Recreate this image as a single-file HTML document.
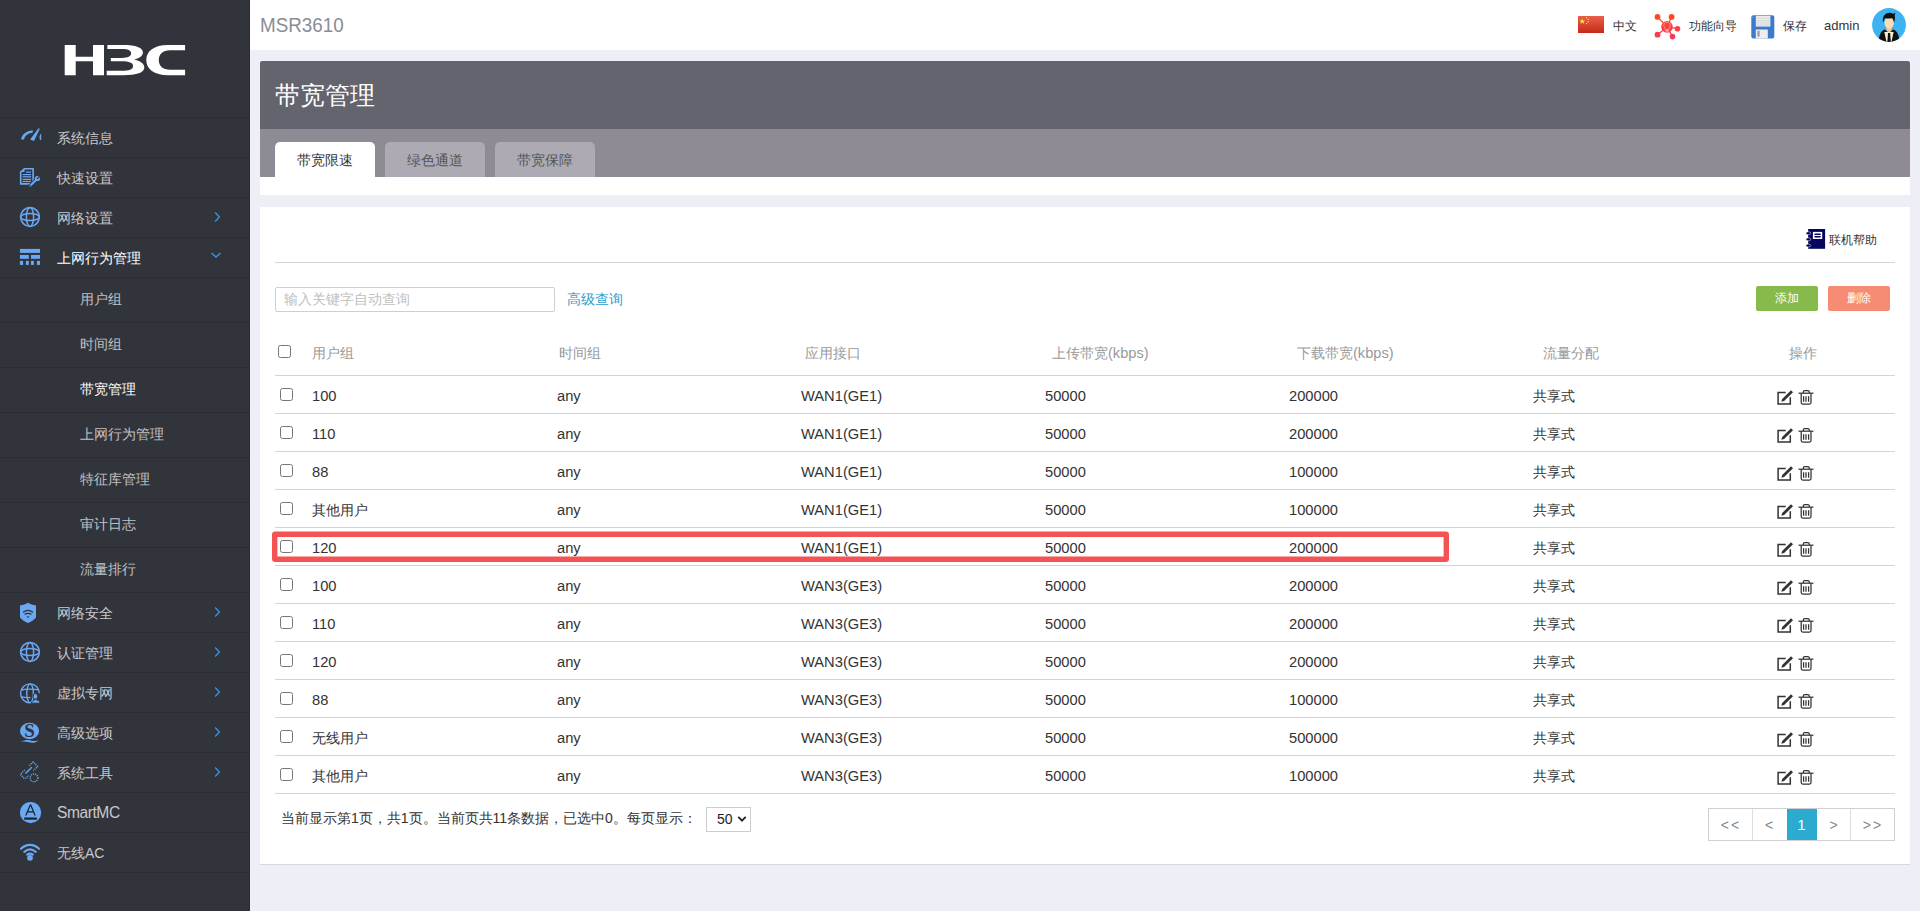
<!DOCTYPE html>
<html><head><meta charset="utf-8"><title>MSR3610</title>
<style>*{margin:0;padding:0;box-sizing:border-box}
html,body{width:1920px;height:911px;overflow:hidden;background:#eeeef7;font-family:"Liberation Sans",sans-serif;}
.abs{position:absolute}
#side{position:absolute;left:0;top:0;width:250px;height:911px;background:#32343c}
.sep{left:0;width:249px;height:1px;background:#2b2d34}
.nt{left:57px;font-size:14px;line-height:42px;white-space:nowrap}
.st{left:80px;font-size:14px;line-height:45px;white-space:nowrap}
#top{position:absolute;left:250px;top:0;width:1670px;height:50px;background:#fff}
.tr{top:18px;font-size:12px;color:#333;line-height:16px}
.tab{top:142px;width:100px;height:35px;background:#adaab3;border-radius:5px 5px 0 0;font-size:14px;color:#555;text-align:center;line-height:36px}
.hl{left:275px;width:1620px;height:1px;background:#d4d4d4}
.cell{font-size:14.7px;color:#333;white-space:nowrap;line-height:40px}
.cj{font-size:14px;line-height:41px}
.hd{top:344px;font-size:14px;color:#999;white-space:nowrap;line-height:18px}
.cb{width:13px;height:13px;border:1px solid #767676;border-radius:2.5px;background:#fff}
.btn{top:286px;width:62px;height:25px;border-radius:2px;color:#fff;font-size:12px;text-align:center;line-height:25px}
.pg{top:809px;width:60px;text-align:center;font-size:14px;line-height:33px}
</style></head><body>
<div id="side">
<svg class="abs" style="left:60px;top:40px" width="130" height="40" viewBox="0 0 130 40"><g fill="#fff">
<path d="M4.7,4.9H15.7V16.8H33V4.9H44V35.2H33V21.3H15.7V35.2H4.7Z"/>
<path d="M47.4,4.9H63C76,4.9 82.9,7.5 82.9,12.5C82.9,16 79,18.5 74,19.6C80,20.8 84.3,23.5 84.3,27.5C84.3,32.5 77,35.2 63,35.2H46.7V30.8H62C69,30.8 73.1,29.5 73.1,26C73.1,22.8 69,21.3 62,21.3H50.8V17.9H62C68,17.9 71.1,16.2 71.1,13.5C71.1,10.5 68,9.1 62,9.1H47.4Z"/>
<path d="M125.1,4.9H108C94,4.9 86.3,11 86.3,20C86.3,29 94,35.2 108,35.2H125.1V29.8H110C103,29.8 98.8,26 98.8,20C98.8,14 103,10.2 110,10.2H125.1Z"/>
</g></svg>
<div class="abs sep" style="top:117px"></div>
<div class="abs sep" style="top:157px"></div>
<div class="abs sep" style="top:197px"></div>
<div class="abs sep" style="top:237px"></div>
<div class="abs sep" style="top:277px"></div>
<div class="abs sep" style="top:322px"></div>
<div class="abs sep" style="top:367px"></div>
<div class="abs sep" style="top:412px"></div>
<div class="abs sep" style="top:457px"></div>
<div class="abs sep" style="top:502px"></div>
<div class="abs sep" style="top:547px"></div>
<div class="abs sep" style="top:592px"></div>
<div class="abs sep" style="top:632px"></div>
<div class="abs sep" style="top:672px"></div>
<div class="abs sep" style="top:712px"></div>
<div class="abs sep" style="top:752px"></div>
<div class="abs sep" style="top:792px"></div>
<div class="abs sep" style="top:832px"></div>
<div class="abs sep" style="top:872px"></div>
<div class="abs nt" style="top:117px;color:#c8c8ca">系统信息</div>
<svg class="abs" style="left:15px;top:125px" width="30" height="30" viewBox="0 0 30 30"><g fill="#6aa8f2"><path d="M6,14.5 C7,9.5 11,6 17.8,5.2 L17.6,7.8 C12.5,8.5 9.8,11 9,14.5Z"/><path d="M15.1,14.6 L23.6,3.3 L24.8,3.8 L19,15.9Z"/><path d="M25.8,8.8 C24.4,10.5 23.9,12.8 25.3,15.1 L26.2,15.1 L26.2,8.8Z"/></g></svg>
<div class="abs nt" style="top:157px;color:#c8c8ca">快速设置</div>
<svg class="abs" style="left:15px;top:163px" width="30" height="30" viewBox="0 0 30 30"><g fill="none" stroke="#6aa8f2" stroke-width="1.6"><path d="M5.7,9 L9.5,5.7 H18.1 V20.9 H5.7Z"/></g><g fill="#6aa8f2"><path d="M5,9 L9.5,5 V9Z"/><rect x="11" y="8.5" width="5" height="1.2"/><rect x="7.6" y="11" width="8.5" height="1.2"/><rect x="7.6" y="13.2" width="8.5" height="1.2"/><rect x="7.6" y="15.8" width="8.5" height="1.2"/><rect x="7.6" y="17.9" width="8.5" height="1.2"/></g><path d="M14.8,23.2 L21.5,16.6" stroke="#32343c" stroke-width="4" stroke-linecap="round"/><path d="M15.4,22.6 L21.3,16.8" stroke="#6aa8f2" stroke-width="2.1" stroke-linecap="round"/><circle cx="22.4" cy="15.5" r="2.6" fill="#6aa8f2"/><path d="M22.4,15.5 L24.6,11.8 L26.2,13.6Z" fill="#32343c"/><circle cx="22.6" cy="15.3" r="0.9" fill="#32343c"/><circle cx="15.4" cy="22.6" r="0.55" fill="#32343c"/></svg>
<div class="abs nt" style="top:197px;color:#c8c8ca">网络设置</div>
<svg class="abs" style="left:15px;top:203px" width="30" height="30" viewBox="0 0 30 30"><g fill="none" stroke="#6aa8f2" stroke-width="1.5"><circle cx="15" cy="14" r="9.4"/><ellipse cx="15" cy="14" rx="3.6" ry="9.4"/><ellipse cx="15" cy="14" rx="9.4" ry="3.6"/></g></svg>
<svg class="abs" style="left:212px;top:211px" width="10" height="12" viewBox="0 0 10 12"><path d="M3.2,1.5L7.4,6L3.2,10.5" fill="none" stroke="#3a92ea" stroke-width="1.3"/></svg>
<div class="abs nt" style="top:237px;color:#fff">上网行为管理</div>
<svg class="abs" style="left:15px;top:243px" width="30" height="30" viewBox="0 0 30 30"><g fill="#6aa8f2"><rect x="4.9" y="5.9" width="20.1" height="4"/><rect x="4.9" y="12" width="8.9" height="3.8"/><rect x="16" y="12" width="9" height="3.8"/><rect x="4.9" y="17.9" width="3.2" height="4"/><rect x="10.9" y="17.9" width="2.9" height="4"/><rect x="16" y="17.9" width="2.9" height="4"/><rect x="21.9" y="17.9" width="3.1" height="4"/></g></svg>
<svg class="abs" style="left:210px;top:250px" width="12" height="10" viewBox="0 0 12 10"><path d="M1.5,3L6,7L10.5,3" fill="none" stroke="#3a92ea" stroke-width="1.4"/></svg>
<div class="abs nt" style="top:592px;color:#c8c8ca">网络安全</div>
<svg class="abs" style="left:15px;top:597px" width="30" height="30" viewBox="0 0 30 30"><path fill="#6aa8f2" d="M5,8.4 C8,8.2 10.5,7.5 13,5.8 C15.5,7.5 18,8.2 21,8.4 V20.5 C19,23 16,25 13,26 C10,25 7,23 5,20.5Z"/><g fill="none" stroke="#32343c" stroke-width="1.2"><path d="M8,15.5 C11,13 15,13 18,15.5"/><path d="M9.6,17.6 C11.8,16 14.2,16 16.4,17.6"/></g><path fill="#32343c" d="M11.2,19.5 H14.8 L13,21Z"/></svg>
<svg class="abs" style="left:212px;top:606px" width="10" height="12" viewBox="0 0 10 12"><path d="M3.2,1.5L7.4,6L3.2,10.5" fill="none" stroke="#3a92ea" stroke-width="1.3"/></svg>
<div class="abs nt" style="top:632px;color:#c8c8ca">认证管理</div>
<svg class="abs" style="left:15px;top:638px" width="30" height="30" viewBox="0 0 30 30"><g fill="none" stroke="#6aa8f2" stroke-width="1.5"><circle cx="15" cy="14" r="9.4"/><ellipse cx="15" cy="14" rx="3.6" ry="9.4"/><ellipse cx="15" cy="14" rx="9.4" ry="3.6"/></g></svg>
<svg class="abs" style="left:212px;top:646px" width="10" height="12" viewBox="0 0 10 12"><path d="M3.2,1.5L7.4,6L3.2,10.5" fill="none" stroke="#3a92ea" stroke-width="1.3"/></svg>
<div class="abs nt" style="top:672px;color:#c8c8ca">虚拟专网</div>
<svg class="abs" style="left:15px;top:677px" width="30" height="30" viewBox="0 0 30 30"><g fill="none" stroke="#6aa8f2" stroke-width="1.4"><path d="M24.4,16.3 A9.4,9.4 0 1 0 14.5,25.7"/><ellipse cx="15.1" cy="16.3" rx="3.3" ry="9.4"/><path d="M6.2,13 C10,11.8 20,11.8 23.8,13"/><path d="M6.2,19.6 C9,20.6 12,20.9 15.5,20.5"/></g><g fill="#6aa8f2" stroke="#32343c" stroke-width="1"><ellipse cx="20.4" cy="19.4" rx="2.3" ry="2.9"/><path d="M16.5,26.2 C16.9,23.8 18.5,22.6 20.4,22.6 C22.4,22.6 24.4,23.6 25.2,26.2Z"/></g></svg>
<svg class="abs" style="left:212px;top:686px" width="10" height="12" viewBox="0 0 10 12"><path d="M3.2,1.5L7.4,6L3.2,10.5" fill="none" stroke="#3a92ea" stroke-width="1.3"/></svg>
<div class="abs nt" style="top:712px;color:#c8c8ca">高级选项</div>
<svg class="abs" style="left:15px;top:717px" width="30" height="30" viewBox="0 0 30 30"><ellipse cx="14.55" cy="14" rx="9.55" ry="8.2" fill="#6aa8f2"/><text x="14.6" y="20.2" text-anchor="middle" font-family="Liberation Serif" font-weight="bold" font-size="19" fill="#32343c">S</text><path fill="#6aa8f2" d="M5.8,24.8 C9,23.2 12,22.5 14.5,23.3 C17,24.2 20,24.4 23.5,23.4 C21,25.8 17,26.2 14.2,25.3 C11.5,24.4 8.5,24.3 5.8,24.8Z"/></svg>
<svg class="abs" style="left:212px;top:726px" width="10" height="12" viewBox="0 0 10 12"><path d="M3.2,1.5L7.4,6L3.2,10.5" fill="none" stroke="#3a92ea" stroke-width="1.3"/></svg>
<div class="abs nt" style="top:752px;color:#c8c8ca">系统工具</div>
<svg class="abs" style="left:15px;top:757px" width="30" height="30" viewBox="0 0 30 30"><g fill="none" stroke="#6aa8f2" stroke-width="1.3" stroke-dasharray="1.2,0.9"><path d="M14.4,8.6 L18.1,5 L22.6,9.5 L18.4,13.6"/><path d="M9.7,13 L5.4,17.3 L9,21.2 L11,21.2 L13.7,18.5"/><circle cx="19" cy="20.9" r="3.9"/></g><path d="M10.5,16.6 L16.8,10.3" stroke="#6aa8f2" stroke-width="1.4"/></svg>
<svg class="abs" style="left:212px;top:766px" width="10" height="12" viewBox="0 0 10 12"><path d="M3.2,1.5L7.4,6L3.2,10.5" fill="none" stroke="#3a92ea" stroke-width="1.3"/></svg>
<div class="abs nt" style="top:792px;color:#c8c8ca;font-size:15.6px;letter-spacing:-0.45px">SmartMC</div>
<svg class="abs" style="left:15px;top:797px" width="30" height="30" viewBox="0 0 30 30"><circle cx="15.6" cy="15.6" r="10.6" fill="#6aa8f2"/><g fill="#1e2026"><path d="M14.8,7.5 H16.2 L20.8,18.6 H19.5 L18.2,15.5 H12.8 L11.5,18.6 H10.2Z M13.3,14.2 H17.7 L15.5,9Z"/><rect x="9.2" y="20.5" width="12.7" height="2.2"/></g></svg>
<div class="abs nt" style="top:832px;color:#c8c8ca">无线AC</div>
<svg class="abs" style="left:15px;top:837px" width="30" height="30" viewBox="0 0 30 30"><g fill="none" stroke="#6aa8f2" stroke-width="2.2" stroke-linecap="round"><path d="M6,11.8 C11.5,6.6 18.5,6.6 24,11.8"/><path d="M9.3,14.8 C12.8,11.8 17.2,11.8 20.7,14.8"/><path d="M12.2,17.6 C14,16.2 16,16.2 17.8,17.6"/></g><circle cx="15" cy="20.8" r="2.9" fill="#6aa8f2"/></svg>
<div class="abs st" style="top:277px;color:#c0c0c2">用户组</div>
<div class="abs st" style="top:322px;color:#c0c0c2">时间组</div>
<div class="abs st" style="top:367px;color:#fff">带宽管理</div>
<div class="abs st" style="top:412px;color:#c0c0c2">上网行为管理</div>
<div class="abs st" style="top:457px;color:#c0c0c2">特征库管理</div>
<div class="abs st" style="top:502px;color:#c0c0c2">审计日志</div>
<div class="abs st" style="top:547px;color:#c0c0c2">流量排行</div>
<div class="abs" style="left:249px;top:0;width:1px;height:911px;background:#2a2c32"></div>
</div>
<div id="top">
<div class="abs" style="left:10px;top:14px;font-size:20px;color:#8a8d96;transform:scaleX(0.94);transform-origin:0 0">MSR3610</div>
</div>
<svg class="abs" style="left:1578px;top:16px" width="26" height="17" viewBox="0 0 26 17"><defs><linearGradient id="fg" x1="0" y1="0" x2="0" y2="1"><stop offset="0" stop-color="#e8604a"/><stop offset="1" stop-color="#c62a18"/></linearGradient></defs><rect width="26" height="17" fill="url(#fg)"/><path fill="#f5e142" d="M4.2,2.2 L5,4.4 L7.3,4.4 L5.5,5.8 L6.2,8 L4.2,6.6 L2.3,8 L3,5.8 L1.2,4.4 L3.5,4.4Z"/><circle cx="8.5" cy="1.8" r="0.7" fill="#f5e142"/><circle cx="10.2" cy="3.4" r="0.7" fill="#f5e142"/><circle cx="10.2" cy="5.8" r="0.7" fill="#f5e142"/><circle cx="8.5" cy="7.5" r="0.7" fill="#f5e142"/></svg>
<div class="abs tr" style="left:1613px">中文</div>
<svg class="abs" style="left:1652px;top:12px" width="30" height="30" viewBox="0 0 30 30"><defs><linearGradient id="wg" gradientUnits="userSpaceOnUse" x1="0" y1="2" x2="0" y2="28"><stop offset="0" stop-color="#ff4a1c"/><stop offset="1" stop-color="#f23a62"/></linearGradient></defs><g stroke="url(#wg)" stroke-width="1.3" fill="none"><path d="M5.5,4.9 L15,14.9 L19.6,4.9 M15,14.9 L25.5,16.7 M15,14.9 L5.5,22.7 M15,14.9 L20.5,24.6"/></g><g fill="url(#wg)"><circle cx="15" cy="14.9" r="5.8"/><circle cx="5.5" cy="4.9" r="2.9"/><circle cx="19.6" cy="4.9" r="2.9"/><circle cx="25.5" cy="16.7" r="2.8"/><circle cx="5.5" cy="22.7" r="2.9"/><circle cx="20.5" cy="24.6" r="2.8"/></g><g fill="none" stroke="#ffb0a0" stroke-width="0.7"><path d="M13.2,17.5 C13,15.5 11.8,15 11.8,13.2 C11.8,11.3 13.2,10.2 15,10.2 C16.8,10.2 18.2,11.3 18.2,13.2 C18.2,15 17,15.5 16.8,17.5Z"/></g><rect x="13.4" y="18.2" width="3.2" height="1.3" fill="#ffd0c0"/></svg>
<div class="abs tr" style="left:1689px">功能向导</div>
<svg class="abs" style="left:1751px;top:15px" width="24" height="24" viewBox="0 0 24 24"><rect x="0.3" y="0.3" width="23" height="23.2" rx="2" fill="#3a7bcb"/><rect x="4.8" y="0.8" width="14.6" height="10.8" fill="#eaeaea"/><g stroke="#c8c8c8" stroke-width="0.5"><path d="M5,3.2H19.2M5,5.5H19.2M5,7.8H19.2M5,10H19.2"/></g><rect x="4.8" y="14.5" width="12" height="9" fill="#eeeeee"/><rect x="6.4" y="15.8" width="2.2" height="5.8" fill="#999"/><rect x="1.2" y="1.8" width="0.9" height="0.9" fill="#9cc0ea"/></svg>
<div class="abs tr" style="left:1783px">保存</div>
<div class="abs" style="left:1824px;top:18px;font-size:13px;color:#333">admin</div>
<svg class="abs" style="left:1872px;top:8px" width="34" height="34" viewBox="0 0 34 34"><defs><clipPath id="cc"><circle cx="17" cy="17" r="16.9"/></clipPath></defs><circle cx="17" cy="17" r="16.9" fill="#3db4f1"/><g clip-path="url(#cc)"><path fill="#111" d="M6.8,34 C7,27 8.5,23.5 12.5,21.5 L17,23.5 L21.5,21.5 C25.5,23.5 27.3,27 27.3,34Z"/><path fill="#f4f0d0" d="M12.3,24 L14.5,34 H19.5 L21.6,24 L17,23.8Z"/><path fill="#111" d="M16,25 H18.2 L18.8,34 H15.4Z"/><path fill="#f5c89a" d="M14.5,19 H19.5 V23 L17,24.2 L14.5,23Z"/><ellipse cx="17.2" cy="15" rx="4.7" ry="5.6" fill="#fbdcb4"/><path fill="#111" d="M11,14.8 C10.2,9.5 12,5.5 16.5,5 C18.5,4.6 20,5 21,6 C22,5.6 22.8,5.2 23.5,4.8 C23,6.2 22.7,7 22.8,8 C23.2,10 22.9,12.5 22,14.5 C21.5,12.2 21,10.8 20,10 C18,10.8 15,10.6 13,10 C12.3,11.5 11.8,13 11,14.8Z"/></g></svg>

<div class="abs" style="left:260px;top:61px;width:1650px;height:134px;background:#fff;border-radius:2px 2px 0 0"></div>
<div class="abs" style="left:260px;top:61px;width:1650px;height:68px;background:#64646f;border-radius:2px 2px 0 0"></div>
<div class="abs" style="left:275px;top:78px;font-size:25px;color:#fff;line-height:34px">带宽管理</div>
<div class="abs" style="left:260px;top:129px;width:1650px;height:48px;background:#8e8b95"></div>
<div class="abs tab" style="left:275px;background:#fff;color:#333">带宽限速</div>
<div class="abs tab" style="left:385px">绿色通道</div>
<div class="abs tab" style="left:495px">带宽保障</div>

<div class="abs" style="left:260px;top:207px;width:1650px;height:658px;background:#fff;border-bottom:1px solid #d8d8dc"></div>
<svg class="abs" style="left:1805px;top:229px" width="21" height="21" viewBox="0 0 21 21"><rect x="3.15" y="0" width="16.95" height="19.8" fill="#06065e"/><g fill="#06065e" stroke="#fff" stroke-width="0.5"><ellipse cx="3.4" cy="4.2" rx="2.4" ry="1.5"/><ellipse cx="3.4" cy="10.3" rx="2.4" ry="1.5"/><ellipse cx="3.4" cy="16.5" rx="2.4" ry="1.5"/></g><rect x="7.9" y="2.9" width="9.3" height="7.1" fill="#fff"/><rect x="9.3" y="4.5" width="6.6" height="1.5" rx="0.75" fill="#06065e"/><rect x="9.3" y="7.1" width="6.6" height="1.5" rx="0.75" fill="#06065e"/></svg>
<div class="abs" style="left:1829px;top:232px;font-size:12px;color:#333;line-height:16px">联机帮助</div>
<div class="abs hl" style="top:262px"></div>
<div class="abs" style="left:275px;top:287px;width:280px;height:25px;border:1px solid #cfcfcf;border-radius:2px;background:#fff"></div>
<div class="abs" style="left:284px;top:290px;font-size:14px;color:#c0c0c0;line-height:18px">输入关键字自动查询</div>
<div class="abs" style="left:567px;top:290px;font-size:14px;color:#2aa0cf;line-height:18px">高级查询</div>
<div class="abs btn" style="left:1756px;background:#86bb4c">添加</div>
<div class="abs btn" style="left:1828px;background:#f78c74">删除</div>
<div class="abs cb" style="left:278px;top:345px"></div>
<div class="abs hd" style="left:312px">用户组</div>
<div class="abs hd" style="left:559px">时间组</div>
<div class="abs hd" style="left:805px">应用接口</div>
<div class="abs hd" style="left:1052px">上传带宽<span style="font-size:14.6px">(kbps)</span></div>
<div class="abs hd" style="left:1297px">下载带宽<span style="font-size:14.6px">(kbps)</span></div>
<div class="abs hd" style="left:1543px">流量分配</div>
<div class="abs hd" style="left:1789px">操作</div>
<div class="abs hl" style="top:375px"></div>
<div class="abs cb" style="left:280px;top:388px"></div>
<div class="abs cell" style="left:312px;top:376px">100</div>
<div class="abs cell" style="left:557px;top:376px">any</div>
<div class="abs cell" style="left:801px;top:376px">WAN1(GE1)</div>
<div class="abs cell" style="left:1045px;top:376px">50000</div>
<div class="abs cell" style="left:1289px;top:376px">200000</div>
<div class="abs cell cj" style="left:1533px;top:376px">共享式</div>
<svg class="abs" style="left:1776px;top:390px" width="18" height="16" viewBox="0 0 18 16"><path d="M9.7,2.6 H2.1 V14.1 H14.3 V7.3" fill="none" stroke="#333" stroke-width="1.5"/><path d="M5.3,11.7 L6.2,8.9 L15,0.3 L17,2.3 L8.1,10.9Z" fill="#333"/></svg>
<svg class="abs" style="left:1797.5px;top:389px" width="16" height="17" viewBox="0 0 16 17"><g fill="none" stroke="#333" stroke-width="1.25"><path d="M0.5,4.2 H15.4"/><path d="M5.3,4 V2.9 C5.3,1.9 5.9,1.6 6.8,1.6 H9.8 C10.7,1.6 11.3,1.9 11.3,2.9 V4"/><path d="M3.2,4.2 V13.6 C3.2,14.6 3.8,15.1 4.7,15.1 H11.5 C12.4,15.1 13,14.6 13,13.6 V4.2"/><path d="M5.6,7.2 V12.7 M8,7.2 V12.7 M10.6,7.2 V12.7"/></g></svg>
<div class="abs hl" style="top:413px"></div>
<div class="abs cb" style="left:280px;top:426px"></div>
<div class="abs cell" style="left:312px;top:414px">110</div>
<div class="abs cell" style="left:557px;top:414px">any</div>
<div class="abs cell" style="left:801px;top:414px">WAN1(GE1)</div>
<div class="abs cell" style="left:1045px;top:414px">50000</div>
<div class="abs cell" style="left:1289px;top:414px">200000</div>
<div class="abs cell cj" style="left:1533px;top:414px">共享式</div>
<svg class="abs" style="left:1776px;top:428px" width="18" height="16" viewBox="0 0 18 16"><path d="M9.7,2.6 H2.1 V14.1 H14.3 V7.3" fill="none" stroke="#333" stroke-width="1.5"/><path d="M5.3,11.7 L6.2,8.9 L15,0.3 L17,2.3 L8.1,10.9Z" fill="#333"/></svg>
<svg class="abs" style="left:1797.5px;top:427px" width="16" height="17" viewBox="0 0 16 17"><g fill="none" stroke="#333" stroke-width="1.25"><path d="M0.5,4.2 H15.4"/><path d="M5.3,4 V2.9 C5.3,1.9 5.9,1.6 6.8,1.6 H9.8 C10.7,1.6 11.3,1.9 11.3,2.9 V4"/><path d="M3.2,4.2 V13.6 C3.2,14.6 3.8,15.1 4.7,15.1 H11.5 C12.4,15.1 13,14.6 13,13.6 V4.2"/><path d="M5.6,7.2 V12.7 M8,7.2 V12.7 M10.6,7.2 V12.7"/></g></svg>
<div class="abs hl" style="top:451px"></div>
<div class="abs cb" style="left:280px;top:464px"></div>
<div class="abs cell" style="left:312px;top:452px">88</div>
<div class="abs cell" style="left:557px;top:452px">any</div>
<div class="abs cell" style="left:801px;top:452px">WAN1(GE1)</div>
<div class="abs cell" style="left:1045px;top:452px">50000</div>
<div class="abs cell" style="left:1289px;top:452px">100000</div>
<div class="abs cell cj" style="left:1533px;top:452px">共享式</div>
<svg class="abs" style="left:1776px;top:466px" width="18" height="16" viewBox="0 0 18 16"><path d="M9.7,2.6 H2.1 V14.1 H14.3 V7.3" fill="none" stroke="#333" stroke-width="1.5"/><path d="M5.3,11.7 L6.2,8.9 L15,0.3 L17,2.3 L8.1,10.9Z" fill="#333"/></svg>
<svg class="abs" style="left:1797.5px;top:465px" width="16" height="17" viewBox="0 0 16 17"><g fill="none" stroke="#333" stroke-width="1.25"><path d="M0.5,4.2 H15.4"/><path d="M5.3,4 V2.9 C5.3,1.9 5.9,1.6 6.8,1.6 H9.8 C10.7,1.6 11.3,1.9 11.3,2.9 V4"/><path d="M3.2,4.2 V13.6 C3.2,14.6 3.8,15.1 4.7,15.1 H11.5 C12.4,15.1 13,14.6 13,13.6 V4.2"/><path d="M5.6,7.2 V12.7 M8,7.2 V12.7 M10.6,7.2 V12.7"/></g></svg>
<div class="abs hl" style="top:489px"></div>
<div class="abs cb" style="left:280px;top:502px"></div>
<div class="abs cell cj" style="left:312px;top:490px">其他用户</div>
<div class="abs cell" style="left:557px;top:490px">any</div>
<div class="abs cell" style="left:801px;top:490px">WAN1(GE1)</div>
<div class="abs cell" style="left:1045px;top:490px">50000</div>
<div class="abs cell" style="left:1289px;top:490px">100000</div>
<div class="abs cell cj" style="left:1533px;top:490px">共享式</div>
<svg class="abs" style="left:1776px;top:504px" width="18" height="16" viewBox="0 0 18 16"><path d="M9.7,2.6 H2.1 V14.1 H14.3 V7.3" fill="none" stroke="#333" stroke-width="1.5"/><path d="M5.3,11.7 L6.2,8.9 L15,0.3 L17,2.3 L8.1,10.9Z" fill="#333"/></svg>
<svg class="abs" style="left:1797.5px;top:503px" width="16" height="17" viewBox="0 0 16 17"><g fill="none" stroke="#333" stroke-width="1.25"><path d="M0.5,4.2 H15.4"/><path d="M5.3,4 V2.9 C5.3,1.9 5.9,1.6 6.8,1.6 H9.8 C10.7,1.6 11.3,1.9 11.3,2.9 V4"/><path d="M3.2,4.2 V13.6 C3.2,14.6 3.8,15.1 4.7,15.1 H11.5 C12.4,15.1 13,14.6 13,13.6 V4.2"/><path d="M5.6,7.2 V12.7 M8,7.2 V12.7 M10.6,7.2 V12.7"/></g></svg>
<div class="abs hl" style="top:527px"></div>
<div class="abs cb" style="left:280px;top:540px"></div>
<div class="abs cell" style="left:312px;top:528px">120</div>
<div class="abs cell" style="left:557px;top:528px">any</div>
<div class="abs cell" style="left:801px;top:528px">WAN1(GE1)</div>
<div class="abs cell" style="left:1045px;top:528px">50000</div>
<div class="abs cell" style="left:1289px;top:528px">200000</div>
<div class="abs cell cj" style="left:1533px;top:528px">共享式</div>
<svg class="abs" style="left:1776px;top:542px" width="18" height="16" viewBox="0 0 18 16"><path d="M9.7,2.6 H2.1 V14.1 H14.3 V7.3" fill="none" stroke="#333" stroke-width="1.5"/><path d="M5.3,11.7 L6.2,8.9 L15,0.3 L17,2.3 L8.1,10.9Z" fill="#333"/></svg>
<svg class="abs" style="left:1797.5px;top:541px" width="16" height="17" viewBox="0 0 16 17"><g fill="none" stroke="#333" stroke-width="1.25"><path d="M0.5,4.2 H15.4"/><path d="M5.3,4 V2.9 C5.3,1.9 5.9,1.6 6.8,1.6 H9.8 C10.7,1.6 11.3,1.9 11.3,2.9 V4"/><path d="M3.2,4.2 V13.6 C3.2,14.6 3.8,15.1 4.7,15.1 H11.5 C12.4,15.1 13,14.6 13,13.6 V4.2"/><path d="M5.6,7.2 V12.7 M8,7.2 V12.7 M10.6,7.2 V12.7"/></g></svg>
<div class="abs hl" style="top:565px"></div>
<div class="abs cb" style="left:280px;top:578px"></div>
<div class="abs cell" style="left:312px;top:566px">100</div>
<div class="abs cell" style="left:557px;top:566px">any</div>
<div class="abs cell" style="left:801px;top:566px">WAN3(GE3)</div>
<div class="abs cell" style="left:1045px;top:566px">50000</div>
<div class="abs cell" style="left:1289px;top:566px">200000</div>
<div class="abs cell cj" style="left:1533px;top:566px">共享式</div>
<svg class="abs" style="left:1776px;top:580px" width="18" height="16" viewBox="0 0 18 16"><path d="M9.7,2.6 H2.1 V14.1 H14.3 V7.3" fill="none" stroke="#333" stroke-width="1.5"/><path d="M5.3,11.7 L6.2,8.9 L15,0.3 L17,2.3 L8.1,10.9Z" fill="#333"/></svg>
<svg class="abs" style="left:1797.5px;top:579px" width="16" height="17" viewBox="0 0 16 17"><g fill="none" stroke="#333" stroke-width="1.25"><path d="M0.5,4.2 H15.4"/><path d="M5.3,4 V2.9 C5.3,1.9 5.9,1.6 6.8,1.6 H9.8 C10.7,1.6 11.3,1.9 11.3,2.9 V4"/><path d="M3.2,4.2 V13.6 C3.2,14.6 3.8,15.1 4.7,15.1 H11.5 C12.4,15.1 13,14.6 13,13.6 V4.2"/><path d="M5.6,7.2 V12.7 M8,7.2 V12.7 M10.6,7.2 V12.7"/></g></svg>
<div class="abs hl" style="top:603px"></div>
<div class="abs cb" style="left:280px;top:616px"></div>
<div class="abs cell" style="left:312px;top:604px">110</div>
<div class="abs cell" style="left:557px;top:604px">any</div>
<div class="abs cell" style="left:801px;top:604px">WAN3(GE3)</div>
<div class="abs cell" style="left:1045px;top:604px">50000</div>
<div class="abs cell" style="left:1289px;top:604px">200000</div>
<div class="abs cell cj" style="left:1533px;top:604px">共享式</div>
<svg class="abs" style="left:1776px;top:618px" width="18" height="16" viewBox="0 0 18 16"><path d="M9.7,2.6 H2.1 V14.1 H14.3 V7.3" fill="none" stroke="#333" stroke-width="1.5"/><path d="M5.3,11.7 L6.2,8.9 L15,0.3 L17,2.3 L8.1,10.9Z" fill="#333"/></svg>
<svg class="abs" style="left:1797.5px;top:617px" width="16" height="17" viewBox="0 0 16 17"><g fill="none" stroke="#333" stroke-width="1.25"><path d="M0.5,4.2 H15.4"/><path d="M5.3,4 V2.9 C5.3,1.9 5.9,1.6 6.8,1.6 H9.8 C10.7,1.6 11.3,1.9 11.3,2.9 V4"/><path d="M3.2,4.2 V13.6 C3.2,14.6 3.8,15.1 4.7,15.1 H11.5 C12.4,15.1 13,14.6 13,13.6 V4.2"/><path d="M5.6,7.2 V12.7 M8,7.2 V12.7 M10.6,7.2 V12.7"/></g></svg>
<div class="abs hl" style="top:641px"></div>
<div class="abs cb" style="left:280px;top:654px"></div>
<div class="abs cell" style="left:312px;top:642px">120</div>
<div class="abs cell" style="left:557px;top:642px">any</div>
<div class="abs cell" style="left:801px;top:642px">WAN3(GE3)</div>
<div class="abs cell" style="left:1045px;top:642px">50000</div>
<div class="abs cell" style="left:1289px;top:642px">200000</div>
<div class="abs cell cj" style="left:1533px;top:642px">共享式</div>
<svg class="abs" style="left:1776px;top:656px" width="18" height="16" viewBox="0 0 18 16"><path d="M9.7,2.6 H2.1 V14.1 H14.3 V7.3" fill="none" stroke="#333" stroke-width="1.5"/><path d="M5.3,11.7 L6.2,8.9 L15,0.3 L17,2.3 L8.1,10.9Z" fill="#333"/></svg>
<svg class="abs" style="left:1797.5px;top:655px" width="16" height="17" viewBox="0 0 16 17"><g fill="none" stroke="#333" stroke-width="1.25"><path d="M0.5,4.2 H15.4"/><path d="M5.3,4 V2.9 C5.3,1.9 5.9,1.6 6.8,1.6 H9.8 C10.7,1.6 11.3,1.9 11.3,2.9 V4"/><path d="M3.2,4.2 V13.6 C3.2,14.6 3.8,15.1 4.7,15.1 H11.5 C12.4,15.1 13,14.6 13,13.6 V4.2"/><path d="M5.6,7.2 V12.7 M8,7.2 V12.7 M10.6,7.2 V12.7"/></g></svg>
<div class="abs hl" style="top:679px"></div>
<div class="abs cb" style="left:280px;top:692px"></div>
<div class="abs cell" style="left:312px;top:680px">88</div>
<div class="abs cell" style="left:557px;top:680px">any</div>
<div class="abs cell" style="left:801px;top:680px">WAN3(GE3)</div>
<div class="abs cell" style="left:1045px;top:680px">50000</div>
<div class="abs cell" style="left:1289px;top:680px">100000</div>
<div class="abs cell cj" style="left:1533px;top:680px">共享式</div>
<svg class="abs" style="left:1776px;top:694px" width="18" height="16" viewBox="0 0 18 16"><path d="M9.7,2.6 H2.1 V14.1 H14.3 V7.3" fill="none" stroke="#333" stroke-width="1.5"/><path d="M5.3,11.7 L6.2,8.9 L15,0.3 L17,2.3 L8.1,10.9Z" fill="#333"/></svg>
<svg class="abs" style="left:1797.5px;top:693px" width="16" height="17" viewBox="0 0 16 17"><g fill="none" stroke="#333" stroke-width="1.25"><path d="M0.5,4.2 H15.4"/><path d="M5.3,4 V2.9 C5.3,1.9 5.9,1.6 6.8,1.6 H9.8 C10.7,1.6 11.3,1.9 11.3,2.9 V4"/><path d="M3.2,4.2 V13.6 C3.2,14.6 3.8,15.1 4.7,15.1 H11.5 C12.4,15.1 13,14.6 13,13.6 V4.2"/><path d="M5.6,7.2 V12.7 M8,7.2 V12.7 M10.6,7.2 V12.7"/></g></svg>
<div class="abs hl" style="top:717px"></div>
<div class="abs cb" style="left:280px;top:730px"></div>
<div class="abs cell cj" style="left:312px;top:718px">无线用户</div>
<div class="abs cell" style="left:557px;top:718px">any</div>
<div class="abs cell" style="left:801px;top:718px">WAN3(GE3)</div>
<div class="abs cell" style="left:1045px;top:718px">50000</div>
<div class="abs cell" style="left:1289px;top:718px">500000</div>
<div class="abs cell cj" style="left:1533px;top:718px">共享式</div>
<svg class="abs" style="left:1776px;top:732px" width="18" height="16" viewBox="0 0 18 16"><path d="M9.7,2.6 H2.1 V14.1 H14.3 V7.3" fill="none" stroke="#333" stroke-width="1.5"/><path d="M5.3,11.7 L6.2,8.9 L15,0.3 L17,2.3 L8.1,10.9Z" fill="#333"/></svg>
<svg class="abs" style="left:1797.5px;top:731px" width="16" height="17" viewBox="0 0 16 17"><g fill="none" stroke="#333" stroke-width="1.25"><path d="M0.5,4.2 H15.4"/><path d="M5.3,4 V2.9 C5.3,1.9 5.9,1.6 6.8,1.6 H9.8 C10.7,1.6 11.3,1.9 11.3,2.9 V4"/><path d="M3.2,4.2 V13.6 C3.2,14.6 3.8,15.1 4.7,15.1 H11.5 C12.4,15.1 13,14.6 13,13.6 V4.2"/><path d="M5.6,7.2 V12.7 M8,7.2 V12.7 M10.6,7.2 V12.7"/></g></svg>
<div class="abs hl" style="top:755px"></div>
<div class="abs cb" style="left:280px;top:768px"></div>
<div class="abs cell cj" style="left:312px;top:756px">其他用户</div>
<div class="abs cell" style="left:557px;top:756px">any</div>
<div class="abs cell" style="left:801px;top:756px">WAN3(GE3)</div>
<div class="abs cell" style="left:1045px;top:756px">50000</div>
<div class="abs cell" style="left:1289px;top:756px">100000</div>
<div class="abs cell cj" style="left:1533px;top:756px">共享式</div>
<svg class="abs" style="left:1776px;top:770px" width="18" height="16" viewBox="0 0 18 16"><path d="M9.7,2.6 H2.1 V14.1 H14.3 V7.3" fill="none" stroke="#333" stroke-width="1.5"/><path d="M5.3,11.7 L6.2,8.9 L15,0.3 L17,2.3 L8.1,10.9Z" fill="#333"/></svg>
<svg class="abs" style="left:1797.5px;top:769px" width="16" height="17" viewBox="0 0 16 17"><g fill="none" stroke="#333" stroke-width="1.25"><path d="M0.5,4.2 H15.4"/><path d="M5.3,4 V2.9 C5.3,1.9 5.9,1.6 6.8,1.6 H9.8 C10.7,1.6 11.3,1.9 11.3,2.9 V4"/><path d="M3.2,4.2 V13.6 C3.2,14.6 3.8,15.1 4.7,15.1 H11.5 C12.4,15.1 13,14.6 13,13.6 V4.2"/><path d="M5.6,7.2 V12.7 M8,7.2 V12.7 M10.6,7.2 V12.7"/></g></svg>
<div class="abs hl" style="top:793px"></div>
<svg class="abs" style="left:0;top:0" width="1920" height="911"><rect x="274.7" y="534.2" width="1171.6" height="25.1" rx="0.6" fill="none" stroke="#f55254" stroke-width="5.4"/></svg>
<div class="abs" style="left:281px;top:809px;font-size:14px;color:#333;line-height:18px">当前显示第1页，共1页。当前页共11条数据，已选中0。每页显示：</div>
<div class="abs" style="left:706px;top:807px;width:45px;height:25px;border:1px solid #cdcdcd;background:#fff"></div>
<div class="abs" style="left:717px;top:810px;font-size:14px;color:#222;line-height:18px">50</div>
<svg class="abs" style="left:737px;top:815px" width="10" height="8" viewBox="0 0 10 8"><path d="M1.3,1.8 L5,5.6 L8.7,1.8" fill="none" stroke="#222" stroke-width="1.8"/></svg>
<div class="abs" style="left:1708px;top:808px;width:187px;height:33px;border:1px solid #d0d0d0;background:#fff"></div>
<div class="abs" style="left:1752px;top:809px;width:1px;height:31px;background:#dedede"></div>
<div class="abs" style="left:1850px;top:809px;width:1px;height:31px;background:#dedede"></div>
<div class="abs" style="left:1787px;top:809px;width:30px;height:31px;background:#2aabcf"></div>
<div class="abs pg" style="left:1701px;color:#888"><span style="letter-spacing:2px">&lt;&lt;</span></div>
<div class="abs pg" style="left:1739px;color:#888">&lt;</div>
<div class="abs pg" style="left:1771.5px;color:#fff"><span style="font-size:15px;position:relative;top:-1.5px">1</span></div>
<div class="abs pg" style="left:1803.5px;color:#888">&gt;</div>
<div class="abs pg" style="left:1843px;color:#888"><span style="letter-spacing:2px">&gt;&gt;</span></div>
</body></html>
